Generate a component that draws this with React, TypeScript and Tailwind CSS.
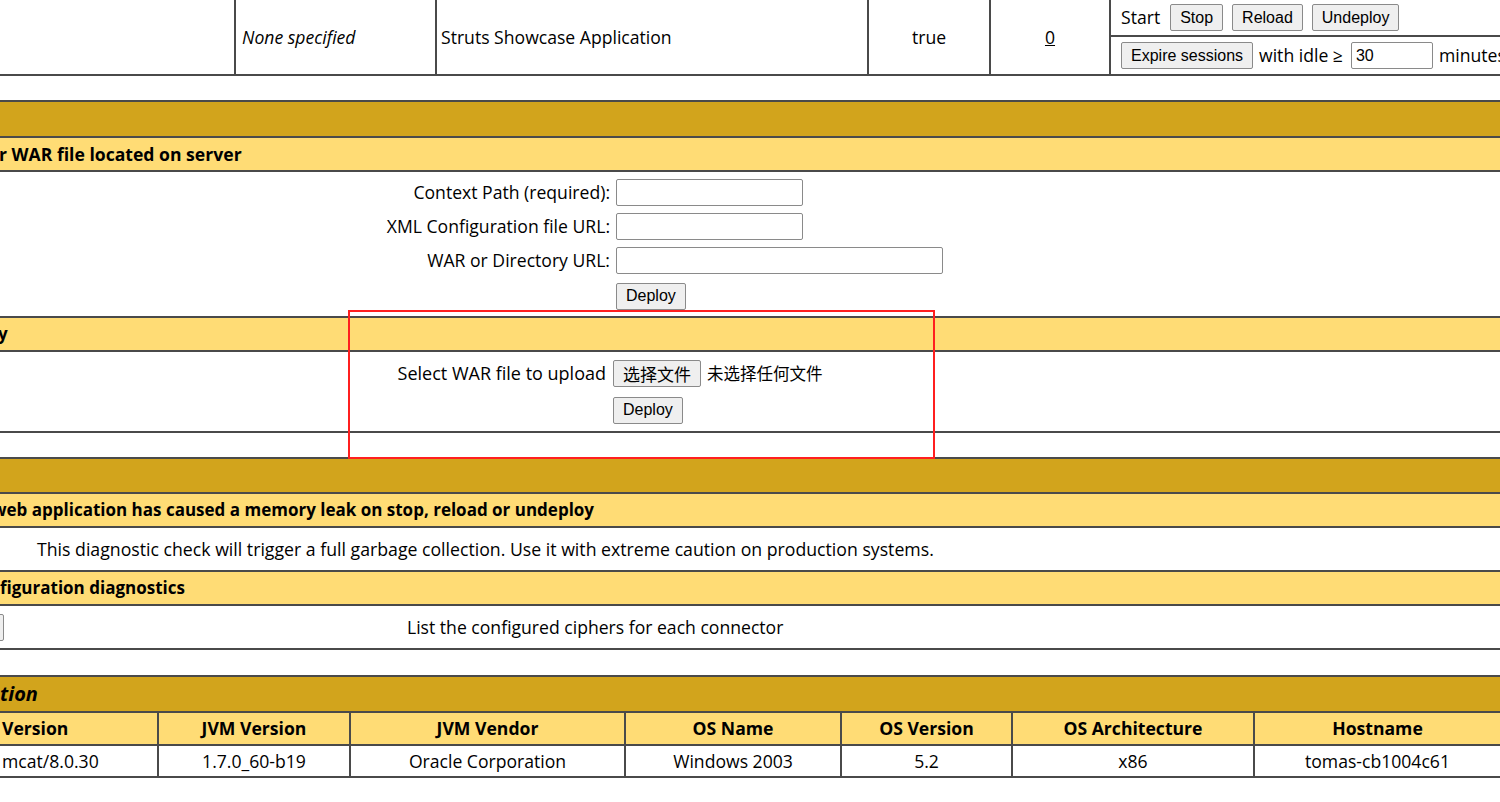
import React from "react";

const btn =
  "h-[27px] px-[9px] bg-[#efefef] border border-[#8a8a8a] rounded-[2px] text-[16px] leading-none text-black [font-family:'Liberation_Sans',Arial,sans-serif]";
const input = "h-[27px] bg-white border border-[#8a8a8a] rounded-[2px]";
const cjk = "[font-family:'Noto_Sans_CJK_SC',sans-serif]";

function DarkBar({ children, h = "h-[36px]" }: { children?: React.ReactNode; h?: string }) {
  return (
    <div className={`${h} bg-[#d2a41c] border-b-2 border-[#4a4a4a] flex items-center`}>
      {children}
    </div>
  );
}

function LightBar({ children, h = "h-[34px]" }: { children?: React.ReactNode; h?: string }) {
  return (
    <div className={`${h} bg-[#ffdc75] border-b-2 border-[#4a4a4a] flex items-center font-bold text-[17px] whitespace-nowrap`}>
      {children}
    </div>
  );
}

export default function App() {
  return (
    <div className="relative w-[1500px] h-[802px] overflow-hidden bg-white text-black text-[17.6px] [font-family:'Open_Sans',sans-serif]">
      {/* application row */}
      <div className="grid grid-cols-[236px_201px_432px_122px_120px_1fr] h-[76px] border-b-2 border-[#4a4a4a]">
        <div className="border-r-2 border-[#4a4a4a]" />
        <div className="border-r-2 border-[#4a4a4a] flex items-center pl-[6px] italic">None specified</div>
        <div className="border-r-2 border-[#4a4a4a] flex items-center pl-[4px]">Struts Showcase Application</div>
        <div className="border-r-2 border-[#4a4a4a] flex items-center justify-center">true</div>
        <div className="border-r-2 border-[#4a4a4a] flex items-center justify-center">
          <span className="underline">0</span>
        </div>
        <div className="flex flex-col whitespace-nowrap">
          <div className="h-[37px] border-b-2 border-[#4a4a4a] flex items-center gap-[9px] pl-[10px]">
            <span className="mr-[1px]">Start</span>
            <button className={btn}>Stop</button>
            <button className={btn}>Reload</button>
            <button className={btn}>Undeploy</button>
          </div>
          <div className="flex-1 flex items-center pl-[10px] gap-[6px]">
            <button className={btn}>Expire sessions</button>
            <span>with idle ≥</span>
            <input
              className={`${input} ml-[2px] w-[82px] px-1 text-[16px] [font-family:'Liberation_Sans',Arial,sans-serif]`}
              defaultValue="30"
            />
            <span>minutes</span>
          </div>
        </div>
      </div>

      {/* deploy section */}
      <div className="mt-[24px] border-t-2 border-[#4a4a4a]">
        <DarkBar />
        <LightBar>
          <span className="-ml-[1px] text-[17.6px]">r WAR file located on server</span>
        </LightBar>
        <div className="h-[146px] border-b-2 border-[#4a4a4a] pt-[7px]">
          <div className="grid grid-cols-[610px_auto] gap-x-[6px] gap-y-[7px] items-center">
            <span className="text-right">Context Path (required):</span>
            <input className={`${input} w-[187px]`} />
            <span className="text-right">XML Configuration file URL:</span>
            <input className={`${input} w-[187px]`} />
            <span className="text-right">WAR or Directory URL:</span>
            <input className={`${input} w-[327px]`} />
            <span />
            <div>
              <button className={btn}>Deploy</button>
            </div>
          </div>
        </div>
        <LightBar>
          <span className="-ml-[2px]">y</span>
        </LightBar>
        <div className="h-[81px] border-b-2 border-[#4a4a4a] pt-[8px]">
          <div className="grid grid-cols-[606px_auto] gap-x-[7px] gap-y-[8px] items-center">
            <span className="text-right text-[18px]">Select WAR file to upload</span>
            <div className="flex items-center gap-[6px] whitespace-nowrap">
              <button className={`h-[27px] px-[9px] bg-[#efefef] border border-[#8a8a8a] rounded-[2px] text-[17px] leading-none ${cjk}`}>
                选择文件
              </button>
              <span className={`text-[16.5px] ${cjk}`}>未选择任何文件</span>
            </div>
            <span />
            <div>
              <button className={btn}>Deploy</button>
            </div>
          </div>
        </div>
      </div>

      {/* diagnostics */}
      <div className="mt-[24px] border-t-2 border-[#4a4a4a]">
        <DarkBar h="h-[35px]" />
        <LightBar>
          <span className="-ml-[8px]">web application has caused a memory leak on stop, reload or undeploy</span>
        </LightBar>
        <div className="h-[44px] border-b-2 border-[#4a4a4a] flex items-center pl-[37px] whitespace-nowrap text-[17.7px]">
          This diagnostic check will trigger a full garbage collection. Use it with extreme caution on production systems.
        </div>
        <LightBar>
          <span>figuration diagnostics</span>
        </LightBar>
        <div className="h-[44px] border-b-2 border-[#4a4a4a] flex items-center whitespace-nowrap">
          <button className={`${btn} -ml-[70px] w-[74px] shrink-0`}>Ciphers</button>
          <span className="ml-[403px]">List the configured ciphers for each connector</span>
        </div>
      </div>

      {/* server information */}
      <div className="mt-[25px] border-t-2 border-[#4a4a4a]">
        <DarkBar h="h-[36px]">
          <span className="font-bold italic text-[20px]">tion</span>
        </DarkBar>
        <div className="grid grid-cols-[159px_192px_275px_216px_171px_242px_1fr] bg-[#ffdc75] h-[33px] border-b-2 border-[#4a4a4a] font-bold">
          <div className="border-r-2 border-[#4a4a4a] flex items-center pl-[2px]">Version</div>
          <div className="border-r-2 border-[#4a4a4a] flex items-center justify-center">JVM Version</div>
          <div className="border-r-2 border-[#4a4a4a] flex items-center justify-center">JVM Vendor</div>
          <div className="border-r-2 border-[#4a4a4a] flex items-center justify-center">OS Name</div>
          <div className="border-r-2 border-[#4a4a4a] flex items-center justify-center">OS Version</div>
          <div className="border-r-2 border-[#4a4a4a] flex items-center justify-center">OS Architecture</div>
          <div className="flex items-center justify-center">Hostname</div>
        </div>
        <div className="grid grid-cols-[159px_192px_275px_216px_171px_242px_1fr] h-[32px] border-b-2 border-[#4a4a4a]">
          <div className="border-r-2 border-[#4a4a4a] flex items-center pl-[2px]">mcat/8.0.30</div>
          <div className="border-r-2 border-[#4a4a4a] flex items-center justify-center">1.7.0_60-b19</div>
          <div className="border-r-2 border-[#4a4a4a] flex items-center justify-center">Oracle Corporation</div>
          <div className="border-r-2 border-[#4a4a4a] flex items-center justify-center">Windows 2003</div>
          <div className="border-r-2 border-[#4a4a4a] flex items-center justify-center">5.2</div>
          <div className="border-r-2 border-[#4a4a4a] flex items-center justify-center">x86</div>
          <div className="flex items-center justify-center">tomas-cb1004c61</div>
        </div>
      </div>

      {/* annotation */}
      <div className="absolute left-[348px] top-[310px] w-[587px] h-[149px] border-2 border-[#ff1f1f] pointer-events-none" />
    </div>
  );
}
